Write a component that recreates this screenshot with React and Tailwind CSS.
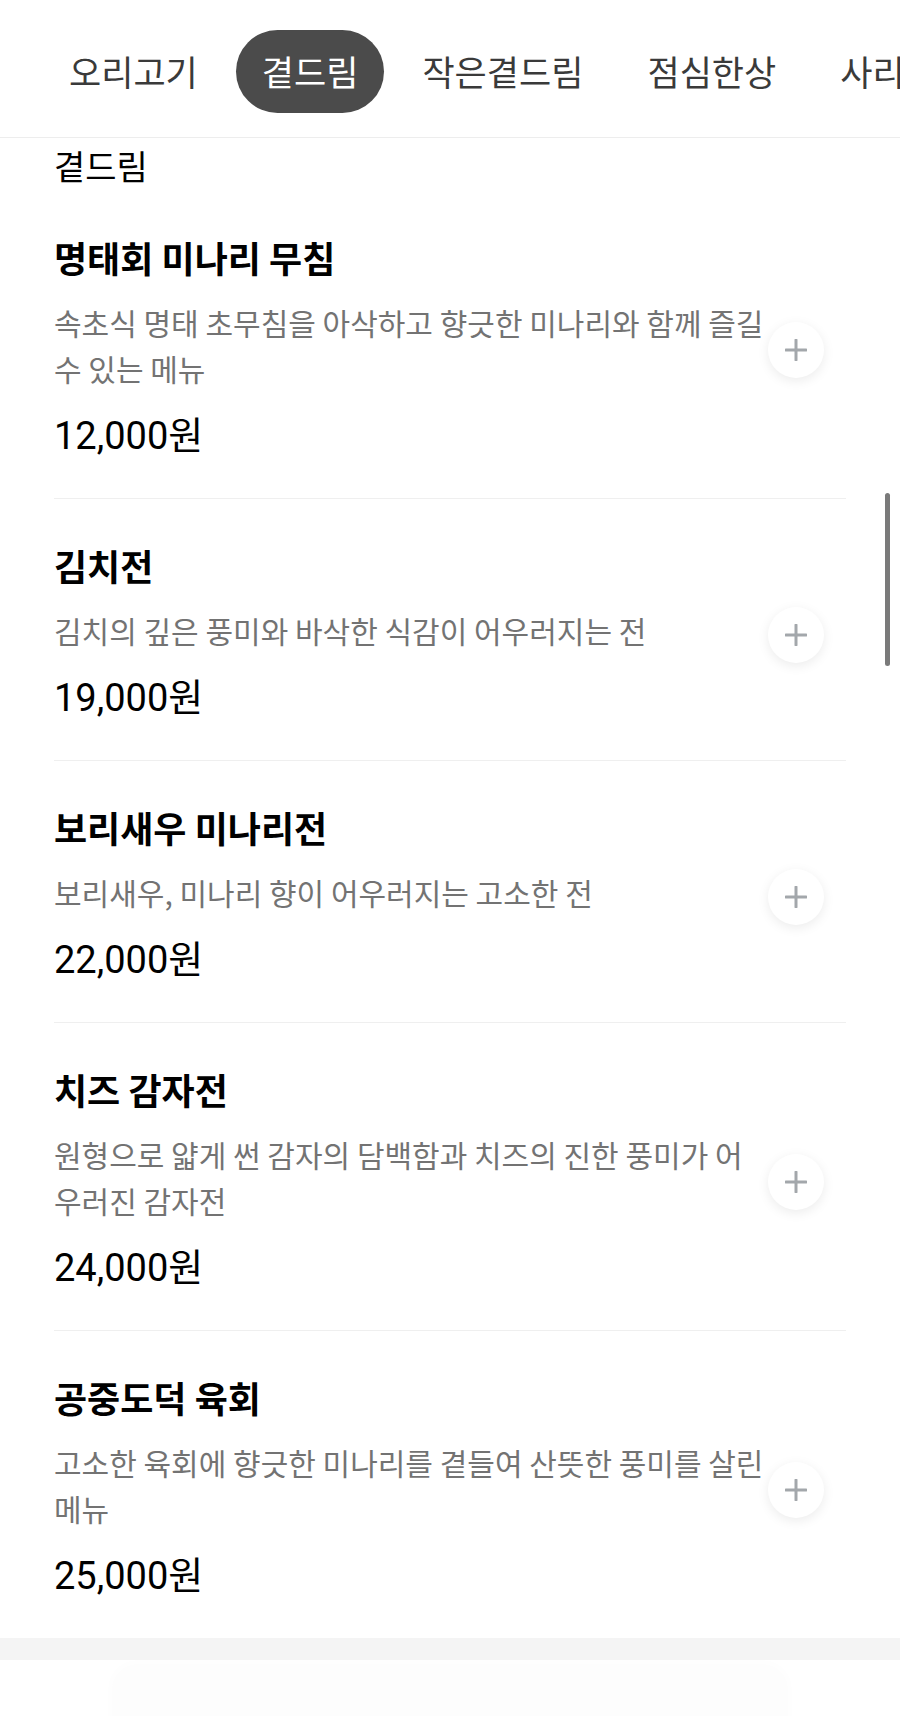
import React from 'react';

const tabs = ['오리고기', '곁드림', '작은곁드림', '점심한상', '사리'];

const items = [
  { name: '명태회 미나리 무침', desc: '속초식 명태 초무침을 아삭하고 향긋한 미나리와 함께 즐길 수 있는 메뉴', price: '12,000원' },
  { name: '김치전', desc: '김치의 깊은 풍미와 바삭한 식감이 어우러지는 전', price: '19,000원' },
  { name: '보리새우 미나리전', desc: '보리새우, 미나리 향이 어우러지는 고소한 전', price: '22,000원' },
  { name: '치즈 감자전', desc: '원형으로 얇게 썬 감자의 담백함과 치즈의 진한 풍미가 어우러진 감자전', price: '24,000원' },
  { name: '공중도덕 육회', desc: '고소한 육회에 향긋한 미나리를 곁들여 산뜻한 풍미를 살린 메뉴', price: '25,000원' },
];

const PlusButton = () => (
  <button className="shrink-0 -ml-[2px] translate-y-[3px] w-[56px] h-[56px] rounded-full bg-white shadow-[0_3px_12px_rgba(0,0,0,0.08)] flex items-center justify-center">
    <svg width="22" height="22" viewBox="0 0 22 22" fill="none">
      <path d="M11 1v20M1 11h20" stroke="#a3a7ab" strokeWidth="3" strokeLinecap="round" />
    </svg>
  </button>
);

const MenuItem = ({ name, desc, price, last }) => (
  <div className={`flex items-center pt-[44px] pb-[40px] ${last ? '' : 'border-b border-[#efefef]'}`}>
    <div className="w-[716px] shrink-0">
      <h3 className="text-[36px] leading-[44px] font-bold text-black">{name}</h3>
      <p className="mt-[20px] text-[30px] leading-[46px] text-[#737373]">{desc}</p>
      <p className="mt-[23px] text-[38px] leading-[44px] text-black font-['Roboto','Noto_Sans_CJK_KR',sans-serif]">{price}</p>
    </div>
    <PlusButton />
  </div>
);

export default function App() {
  return (
    <div className="relative w-[900px] min-h-[1716px] bg-white overflow-hidden font-['Noto_Sans_CJK_KR','Noto_Sans',sans-serif]">
      <nav className="h-[138px] flex items-center pt-[5px] pl-[43px] gap-3 border-b border-[#ededed] whitespace-nowrap">
        {tabs.map((t) => (
          <div
            key={t}
            className={`shrink-0 h-[83px] px-[26px] rounded-full flex items-center text-[35px] ${
              t === '곁드림' ? 'bg-[#4b4b4b] text-white' : 'text-[#3a3a3a]'
            }`}
          >
            {t}
          </div>
        ))}
      </nav>

      <section className="px-[54px]">
        <h2 className="mt-[6px] mb-[3px] text-[34px] leading-[44px] text-black">곁드림</h2>
        {items.map((it, i) => (
          <MenuItem key={it.name} {...it} last={i === items.length - 1} />
        ))}
      </section>

      <div className="h-[22px] bg-[#f4f4f4]" />
      <div className="mx-[112px] mt-[6px] h-[60px] rounded-t-[24px] bg-[#fdfdfd] shadow-[0_-2px_12px_rgba(0,0,0,0.015)]" />

      {/* scroll indicator */}
      <div className="absolute left-[885px] top-[493px] w-[5px] h-[173px] rounded-full bg-[#7a7a7a]" />
    </div>
  );
}
